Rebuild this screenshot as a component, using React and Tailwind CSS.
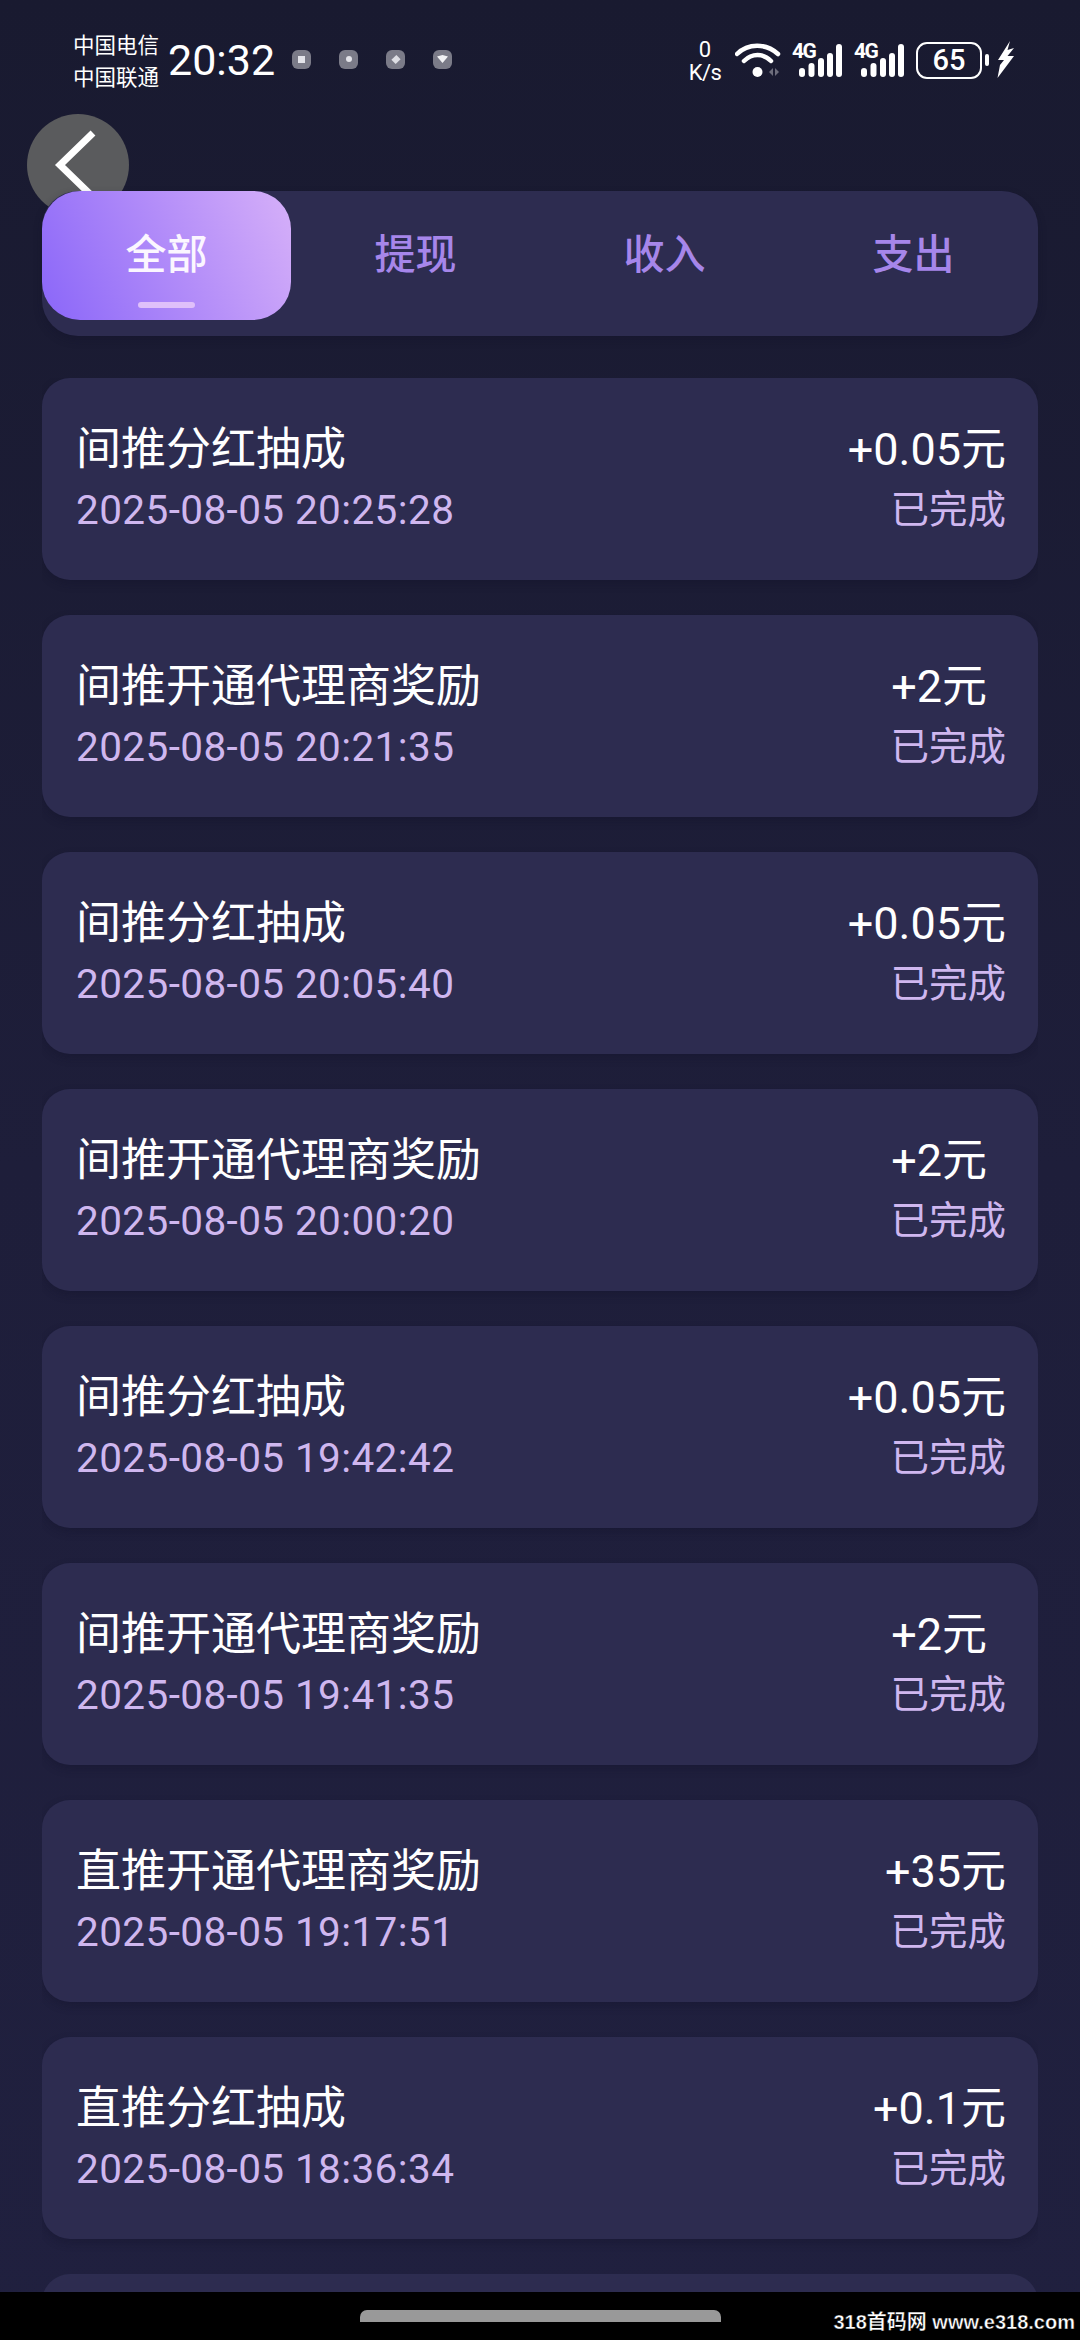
const rows = [
  ["间推分红抽成", "2025-08-05 20:25:28", "+0.05元", false],
  ["间推开通代理商奖励", "2025-08-05 20:21:35", "+2元", true],
  ["间推分红抽成", "2025-08-05 20:05:40", "+0.05元", false],
  ["间推开通代理商奖励", "2025-08-05 20:00:20", "+2元", true],
  ["间推分红抽成", "2025-08-05 19:42:42", "+0.05元", false],
  ["间推开通代理商奖励", "2025-08-05 19:41:35", "+2元", true],
  ["直推开通代理商奖励", "2025-08-05 19:17:51", "+35元", false],
  ["直推分红抽成", "2025-08-05 18:36:34", "+0.1元", false],
];

function Signal() {
  return (
    <div className="h-[34px] w-[50px] relative">
      <span className="absolute left-0 top-[-3px] text-[21px] leading-[22px] font-bold text-white tracking-[-1.5px]">4G</span>
      <svg width="50" height="34" viewBox="0 0 50 34" fill="#fff" className="block">
        <rect x="7" y="25" width="6" height="9" rx="3" />
        <rect x="16.5" y="20" width="6" height="14" rx="3" />
        <rect x="26" y="15" width="6" height="19" rx="3" />
        <rect x="35" y="10" width="6" height="24" rx="3" />
        <rect x="44" y="1" width="6" height="33" rx="3" />
      </svg>
    </div>
  );
}

function StatusBar() {
  return (
    <div className="h-[120px] shrink-0 flex items-center pl-[73px] pr-[65px] text-white">
      <div className="w-[95px] text-[21.5px] leading-[32px] font-['Noto_Sans_CJK_SC',sans-serif]">
        <div>中国电信</div>
        <div>中国联通</div>
      </div>
      <div className="text-[43px] leading-[50px] font-['Roboto',sans-serif] w-[124px]">20:32</div>
      <div className="flex gap-[28px] -mt-[2px]">
        {[0, 1, 2, 3].map((i) => (
          <div key={i} className="w-[19px] h-[19px] rounded-[6px] bg-[#7b7b88] flex items-center justify-center">
            {i === 0 && <div className="w-[7px] h-[7px] bg-[#e4e4ea]" />}
            {i === 1 && <div className="w-[6px] h-[6px] rounded-full bg-[#e4e4ea]" />}
            {i === 2 && <div className="w-[6px] h-[7px] rotate-45 bg-[#dedee4]" />}
            {i === 3 && (
              <svg width="11" height="9" viewBox="0 0 11 9"><path d="M0 1.5 L5.5 0 L11 1.5 L5.5 8z" fill="#f2f2f5" /></svg>
            )}
          </div>
        ))}
      </div>
      <div className="flex-1" />
      <div className="flex items-center gap-[12px]">
        <div className="w-[36px] flex flex-col items-center font-['Roboto',sans-serif] text-[22px] leading-[23px] mt-[2px]">
          <span>0</span>
          <span className="tracking-[-0.5px]">K/s</span>
        </div>
        <svg width="46" height="38" viewBox="0 0 46 38" fill="none" className="-mr-[1px]">
          <path d="M2 13 C13 2 31 2 43 13" stroke="#fff" strokeWidth="4.5" strokeLinecap="round" />
          <path d="M9 20 C17 12 28 12 36 20" stroke="#fff" strokeWidth="4.5" strokeLinecap="round" />
          <circle cx="22.5" cy="31" r="5" fill="#fff" />
          <path d="M34 31 l4 -4 v8z M40 27 l4 4 l-4 4z" fill="#6d6d7c" />
        </svg>
        <Signal />
        <Signal />
        <div className="flex items-center">
          <div className="w-[66px] h-[37px] border-[2.5px] border-white rounded-[11px] flex items-center justify-center text-[29px] font-medium font-['Roboto',sans-serif] leading-none">
            65
          </div>
          <div className="w-[4px] h-[12px] bg-white rounded-[2px] ml-[3px]" />
          <svg width="18" height="38" viewBox="0 0 18 38" className="ml-[8px]">
            <path d="M13 0 L1 19 L7 19 L3 24 L0.5 37 L17 15 L10.5 15 L17 7 L10.5 9z" fill="#fff" />
          </svg>
        </div>
      </div>
    </div>
  );
}

function Tabs() {
  return (
    <div className="relative -mt-[25px] mx-[42px] h-[145px] rounded-[36px] bg-[#2d2c50] grid grid-cols-4 items-start shrink-0 shadow-[0_4px_8px_rgba(18,18,40,0.3)]">
      <div className="h-[129px] rounded-[38px] bg-[linear-gradient(65deg,#8a66f9_0%,#b48ef9_55%,#d6b0f9_100%)] flex flex-col items-center relative">
        <span className="mt-[39px] text-[41px] leading-[50px] text-[#fbf6ff] font-medium">全部</span>
        <span className="absolute bottom-[12px] w-[57px] h-[6px] rounded-full bg-[#dfc0fa]" />
      </div>
      {["提现", "收入", "支出"].map((t) => (
        <div key={t} className="h-[129px] flex justify-center">
          <span className="mt-[39px] text-[41px] leading-[50px] text-[#a686ea] font-medium">{t}</span>
        </div>
      ))}
    </div>
  );
}

function Row({ title, date, amount, offset }) {
  return (
    <div className="h-[202px] shrink-0 rounded-[28px] bg-[#2d2c50] flex justify-between pl-[34px] pr-[32px] pt-[42px] shadow-[0_4px_8px_rgba(18,18,40,0.3)]">
      <div className="flex flex-col">
        <div className="text-[45px] leading-[60px] text-white">{title}</div>
        <div className="text-[40.5px] leading-[50px] mt-[5px] text-[#cfb7ef] font-['Roboto',sans-serif] tracking-[0.4px]">{date}</div>
      </div>
      <div className="flex flex-col items-end">
        <div className={`text-[45px] leading-[60px] text-white ${offset ? "mr-[19px]" : ""}`}>{amount}</div>
        <div className="text-[38.5px] leading-[50px] mt-[5px] text-[#cfb7ef]">已完成</div>
      </div>
    </div>
  );
}

export default function App() {
  return (
    <div className="w-[1080px] h-[2340px] overflow-hidden flex flex-col relative bg-gradient-to-b from-[#191a30] via-[#1e1e3a] to-[#20203f] font-['Roboto','Noto_Sans_CJK_SC',sans-serif]">
      <StatusBar />
      <div className="w-[102px] h-[102px] rounded-full bg-[#5a5b5d] ml-[27px] -mt-[6px] shrink-0 flex items-center justify-center">
        <svg width="46" height="70" viewBox="0 0 46 70" fill="none" className="-ml-[4px]">
          <path d="M40 3 L7 35 L40 67" stroke="#fff" strokeWidth="7" />
        </svg>
      </div>
      <Tabs />
      <div className="flex-1 min-h-0 overflow-hidden mt-[42px] mx-[42px] flex flex-col gap-[35px]">
        {rows.map((r, i) => (
          <Row key={i} title={r[0]} date={r[1]} amount={r[2]} offset={r[3]} />
        ))}
        <div className="h-[202px] shrink-0 rounded-[28px] bg-[#2d2c50]" />
      </div>
      <div className="h-[48px] shrink-0 bg-black flex justify-center pt-[18px]">
        <div className="w-[361px] h-[12px] rounded-t-[7px] bg-[#999999]" />
      </div>
      <div className="absolute right-[5px] bottom-[7px] text-[20px] leading-[22px] font-bold text-white [-webkit-text-stroke:0.4px_#000] font-['Liberation_Sans','Noto_Sans_CJK_SC',sans-serif]">
        318首码网 www.e318.com
      </div>
    </div>
  );
}
